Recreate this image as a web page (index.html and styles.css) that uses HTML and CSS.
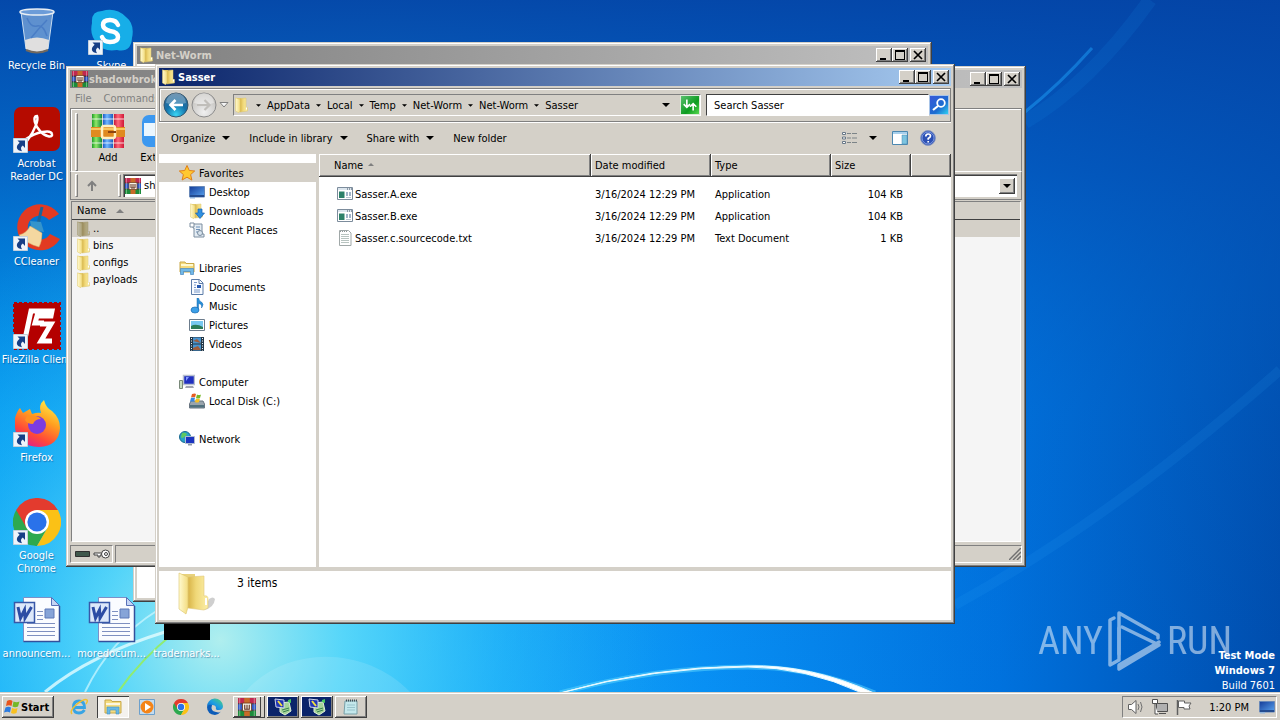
FILE: index.html
```html
<!DOCTYPE html>
<html lang="en">
<head>
<meta charset="UTF-8" />
<meta name="viewport" content="width=device-width, initial-scale=1" />
<title>Desktop</title>
<link rel="stylesheet" href="styles.css">
</head>
<body>

<!-- Shared icons -->
<svg class="defs" aria-hidden="true">
  <defs>
    <linearGradient id="gFolder" x1="0" x2="1"><stop offset="0" stop-color="#d8b448"/><stop offset=".4" stop-color="#f0d878"/><stop offset="1" stop-color="#fbeea8"/></linearGradient>
    <linearGradient id="gFolderFront" x1="0" x2="1"><stop offset="0" stop-color="#fffad0"/><stop offset="1" stop-color="#f3dc80"/></linearGradient>
    <linearGradient id="gRed" x1="0" x2="1"><stop offset="0" stop-color="#c8183c"/><stop offset=".4" stop-color="#ff6878"/><stop offset="1" stop-color="#d01838"/></linearGradient>
    <linearGradient id="gBlue" x1="0" x2="1"><stop offset="0" stop-color="#1c5cc8"/><stop offset=".4" stop-color="#70b8ff"/><stop offset="1" stop-color="#1c5cc0"/></linearGradient>
    <linearGradient id="gGreen" x1="0" x2="1"><stop offset="0" stop-color="#1c9c28"/><stop offset=".4" stop-color="#90e868"/><stop offset="1" stop-color="#108838"/></linearGradient>
    <linearGradient id="gScreen" x1="0" y1="0" x2="1" y2="1"><stop offset="0" stop-color="#143c98"/><stop offset="1" stop-color="#5aa4f0"/></linearGradient>
    <linearGradient id="gFox" x1=".8" y1="0" x2=".3" y2="1"><stop offset="0" stop-color="#fff04a"/><stop offset=".4" stop-color="#ffa020"/><stop offset=".75" stop-color="#ff4838"/><stop offset="1" stop-color="#e0208a"/></linearGradient>
    <radialGradient id="gOrb" cx=".5" cy=".9" r=".9"><stop offset="0" stop-color="#38d4f4"/><stop offset=".5" stop-color="#1470a8"/><stop offset="1" stop-color="#3a6c94"/></radialGradient>
    <radialGradient id="gOrbOff" cx=".5" cy=".8" r=".8"><stop offset="0" stop-color="#f0f0f0"/><stop offset="1" stop-color="#bcbab6"/></radialGradient>
    <linearGradient id="gEdge" x1="0" y1="1" x2="1" y2="0"><stop offset="0" stop-color="#0a58b8"/><stop offset=".5" stop-color="#1e9ce4"/><stop offset="1" stop-color="#50d870"/></linearGradient>
  </defs>
  <symbol id="folder" viewBox="0 0 16 16">
    <path d="M2 1h5v13H2z" fill="#e4cc70"/>
    <path d="M6 1.500l6-.5v9.500h1.500V14L6 15z" fill="url(#gFolder)" stroke="#dcc468" stroke-width=".5"/>
    <path d="M1.500.8L6 2.500V14l-1.200 1.700L1.500 14z" fill="url(#gFolderFront)" stroke="#e0c868" stroke-width=".5"/>
    <path d="M12.500 10.500v2" stroke="#fff"/>
  </symbol>
  <symbol id="shortcut" viewBox="0 0 15 15">
    <path d="M.5.5h14v14H.5z" fill="#eef4fb" stroke="#c4d0dc"/>
    <path d="M4.500 2.500H12V10L9.800 7.600C7.500 9 7.600 11 9 13.200 3.500 12.500 2 8.500 6.600 4.700z" fill="#173f86"/>
  </symbol>
  <symbol id="rar" viewBox="0 0 16 16">
    <path d="M0 0h16v5H0z" fill="#c02850"/><path d="M0 5.500h16v5H0z" fill="#2e56c4"/><path d="M0 11h16v5H0z" fill="#1c8c3a"/>
    <path d="M0 5.200h16M0 10.800h16" stroke="#1c1430" stroke-width=".8"/>
    <path d="M1.500 0v16M14.500 0v16" stroke="#fff" stroke-opacity=".35"/>
    <path d="M5.500 0h5v16h-5z" fill="#c86a28"/>
    <path d="M4 4.500h8v7H4z" fill="#f8f4e8" stroke="#6a3414" stroke-width=".7"/><path d="M6 6v4h4V6M8 6v4" stroke="#603020" fill="none"/>
  </symbol>
  <symbol id="chrome" viewBox="0 0 48 48">
    <path d="M24 24L3.200 12A24 24 0 0 1 44.800 12z" fill="#e33b2e"/>
    <path d="M24 24L24 48A24 24 0 0 1 3.200 12z" fill="#2da94f"/>
    <path d="M24 12h20.800a24 24 0 0 1 .6 1.200L34.400 30 24 24z" fill="#fbc116"/>
    <path d="M34.400 30L24 48a24 24 0 0 1-1.400 0L13.600 30 24 24z" fill="#2da94f"/>
    <path d="M34.400 30L24 48A24 24 0 0 0 44.800 12L30 12z" fill="#fbc116"/>
    <path d="M13.600 30L3.200 12 24 12z" fill="#e33b2e"/>
    <circle cx="24" cy="24" r="12" fill="#fff"/><circle cx="24" cy="24" r="9.600" fill="#2a72ea"/>
  </symbol>
  <symbol id="word" viewBox="0 0 48 48">
    <path d="M10.500 1.500h28l8 8v36h-36z" fill="#fafcff" stroke="#7c90c8"/>
    <path d="M38.500 1.500v8h8z" fill="#c4d4f4" stroke="#5870b8"/>
    <path d="M46.500 10v35.500h-36" fill="none" stroke="#33509c" stroke-width="1.500"/>
    <path d="M14 31.500h28M14 35.500h28M14 39.500h28M24 15.500h6M24 19.500h6M24 23.500h6M14 27.500h28" stroke="#7e90c0"/>
    <path d="M32 13h9v9h-9z" fill="#86a4d8" stroke="#5c78b8"/>
    <path d="M1.500 6.500h20v20h-20z" fill="#dde8fa" stroke="#3858a8" stroke-width="1.500"/>
    <path d="M5 11l2.500 11 4-8 .5 8L18.500 11" fill="none" stroke="#2c4ca4" stroke-width="3"/>
  </symbol>
  <symbol id="monitor" viewBox="0 0 16 16">
    <path d="M.5 2.500h15v10.500H.5z" fill="url(#gScreen)" stroke="#6888b8"/><path d="M1 11h14v2H1z" fill="#244c90"/><path d="M1 13h5v1.500H1z" fill="#90b4dc"/>
  </symbol>
  <symbol id="app" viewBox="0 0 16 16">
    <path d="M.5 1.500h15v12H.5z" fill="#fff" stroke="#7c8c9c"/><path d="M1 2h14v2H1z" fill="#dce6ee"/><path d="M10 3h1M12 3h1M14 3h1" stroke="#405060"/>
    <path d="M2 5.500h5.500V12H2z" fill="#2c8068"/><path d="M9 6h2v4H9zM12 6h2v4h-2z" fill="#a0b4c8"/><path d="M9 11.500h5" stroke="#b8c4d0"/>
  </symbol>
  <symbol id="terminal" viewBox="0 0 18 18">
    <path d="M6 5l9-1 2 9-6 4-5-3z" fill="#a4d498" stroke="#e0f0d8"/><path d="M8 12l7-2M9 14l6-2" stroke="#368050"/>
    <path d="M1 1l9 1v8l-8-1z" fill="#2036b8" stroke="#d0d8e8"/><path d="M4 3l4 5" stroke="#f0e040" stroke-width="2"/>
    <path d="M14 2l3-1v4l-3-1z" fill="#44c860"/>
  </symbol>
  <symbol id="down" viewBox="0 0 8 4"><path d="M0 0h8L4 4z"/></symbol>
  <symbol id="min" viewBox="0 0 16 14"><path d="M4 10h6v2H4z"/></symbol>
  <symbol id="max" viewBox="0 0 16 14"><path d="M3 2h10v10H3zM4 4v7h8V4z" fill-rule="evenodd"/></symbol>
  <symbol id="close" viewBox="0 0 16 14"><path d="M4 3l8 8M12 3l-8 8" stroke="#000" stroke-width="1.700"/></symbol>
</svg>

<main class="desktop">
  <svg class="wallpaper" viewBox="0 0 1280 692" preserveAspectRatio="none" aria-hidden="true">
    <defs>
      <linearGradient id="sky" x1="0" x2="1" y1="0" y2="0">
        <stop offset="0" stop-color="#00a4f6"/><stop offset=".3" stop-color="#20b8f8"/><stop offset=".55" stop-color="#0890f4"/>
        <stop offset=".78" stop-color="#0072de"/><stop offset="1" stop-color="#004cac"/>
      </linearGradient>
      <linearGradient id="shade" x1="0" x2="0" y1="0" y2="1">
        <stop offset="0" stop-color="#0444a6" stop-opacity=".95"/><stop offset=".25" stop-color="#0452b6" stop-opacity=".75"/>
        <stop offset=".6" stop-color="#0468cc" stop-opacity=".2"/><stop offset="1" stop-color="#0468cc" stop-opacity="0"/>
      </linearGradient>
      <radialGradient id="glow" gradientUnits="userSpaceOnUse" cx="220" cy="640" r="440">
        <stop offset="0" stop-color="#b8f2ee" stop-opacity=".95"/><stop offset=".28" stop-color="#60dcfa" stop-opacity=".85"/>
        <stop offset=".65" stop-color="#30c0fc" stop-opacity=".4"/><stop offset="1" stop-color="#20a8f8" stop-opacity="0"/>
      </radialGradient>
    </defs>
    <path d="M0 0h1280v692H0z" fill="url(#sky)"/>
    <path d="M0 0h1280v692H0z" fill="url(#shade)"/>
    <path d="M0 0h1280v692H0z" fill="url(#glow)"/>
    <path d="M955 605Q1110 520 1280 370" fill="none" stroke="#3cb0ff" stroke-opacity=".1" stroke-width="10"/>
    <path d="M1025 112Q1060 84 1092 48" fill="none" stroke="#1c98f0" stroke-opacity=".55" stroke-width="3"/>
    <path d="M1025 122Q1090 84 1150 0" fill="none" stroke="#1c98f0" stroke-opacity=".12" stroke-width="14"/>
    <path d="M245 692C285 645 365 645 410 692z" fill="#fff" opacity=".12"/>
    <path d="M45 692Q90 655 165 632" fill="none" stroke="#e4fcff" stroke-width="3" opacity=".8"/>
    <path d="M85 692Q110 640 158 610" fill="none" stroke="#d0f8ff" stroke-width="2" opacity=".7"/>
    <path d="M118 692Q140 660 175 632" fill="none" stroke="#90ec70" stroke-width="2"/>
    <path d="M560 693Q655 667 748 667Q810 667 875 693" fill="none" stroke="#60d8ff" stroke-width="5" opacity=".5"/>
    <path d="M560 693Q655 667 748 667Q805 667 862 693h12Q810 664 748 666Q650 667 560 693z" fill="#fff" stroke="#e8faff"/>
  </svg>

  <!-- Desktop icons -->
  <nav class="shortcuts">
    <a class="r1 c1" href="#">
      <svg viewBox="0 0 48 48"><path d="M8 4l5 37q11 6 22 0l5-37q-16 5-32 0z" fill="#b8d4f0" fill-opacity=".5" stroke="#c8dcf0"/><path d="M12 32l1 9q11 6 22 0l1-9q-12-5-24 0z" fill="#eee8e0" opacity=".9"/><path d="M14 10q4 10 10 8t10 10M34 12q-8 8-16 18" fill="none" stroke="#3c70c0" stroke-opacity=".6" stroke-width="1.500"/><ellipse cx="24" cy="4" rx="17" ry="3" fill="#6c9cd8" stroke="#e8eef4" stroke-width="1.500"/><path d="M13 42q11 5 22 0" fill="none" stroke="#706860" stroke-width="2"/></svg>
      <span>Recycle Bin</span></a>
    <a class="r1 c2" href="#">
      <svg viewBox="0 0 48 48"><path d="M14 3Q3 3 4 15 1 28 10 36q5 8 19 6 14 3 15-12 3-14-6-21Q28-1 14 3z" fill="#17aee8"/><path d="M30 17q-2-5-8-5-7 0-7 5 0 4 7 6 8 1 8 6t-8 5q-6 0-8-5" fill="none" stroke="#fff" stroke-width="4.500" stroke-linecap="round"/><use href="#shortcut" x="0" y="32" width="15" height="15"/></svg>
      <span>Skype</span></a>
    <a class="r2 c1" href="#">
      <svg viewBox="0 0 48 48"><rect x="1" y="1" width="46" height="44" rx="7" fill="#b50b00"/><path d="M24 10c-5 0-2 10 3 15 5 6 13 7 12 3-1-5-16-2-26 5-5 4-1 6 3-1 5-7 10-18 8-22z" fill="none" stroke="#fff" stroke-width="2.500"/><use href="#shortcut" x="0" y="32" width="15" height="15"/></svg>
      <span>Acrobat<br>Reader DC</span></a>
    <a class="r3 c1" href="#">
      <svg viewBox="0 0 48 48"><path d="M46 10A23 23 0 1 0 47 35L37 30A12 12 0 1 1 36 16z" fill="#e23a22"/><path d="M29 3l-4 17" stroke="#1c6498" stroke-width="3"/><path d="M17 17l11 1 3 10-12-2z" fill="#3494cc"/><path d="M17 22l12 7q0 9-3 14Q14 40 6 31q8-2 11-9z" fill="#f4d8a0" stroke="#d8a860" stroke-width=".5"/><use href="#shortcut" x="0" y="32" width="15" height="15"/></svg>
      <span>CCleaner</span></a>
    <a class="r4 c1 nowrap" href="#">
      <svg viewBox="0 0 48 48"><path d="M1 1h46v46H1z" fill="#b40000" stroke="#b40000" stroke-width="2" stroke-dasharray="3 2"/><path d="M12 37l6-28h21l-1 5H24l-2 7h9M27 22h11L28 39h11" fill="none" stroke="#fff" stroke-width="5"/><use href="#shortcut" x="0" y="32" width="15" height="15"/></svg>
      <span>FileZilla Client</span></a>
    <a class="r5 c1" href="#">
      <svg viewBox="0 0 48 48"><path d="M2 18q2-7 5-10l3 5 7-4 2 5q6-2 9-1-3-8 3-13 2 8 8 11 8 7 8 17-1 18-21 19Q4 46 2 28z" fill="url(#gFox)"/><circle cx="24" cy="25" r="9" fill="#7c3ce0"/><path d="M14 16q10-2 14 3-6 0-8 5-6 0-8-4z" fill="#ff9020"/><use href="#shortcut" x="0" y="32" width="15" height="15"/></svg>
      <span>Firefox</span></a>
    <a class="r6 c1" href="#">
      <svg viewBox="0 0 48 48"><use href="#chrome"/><use href="#shortcut" x="0" y="32" width="15" height="15"/></svg>
      <span>Google<br>Chrome</span></a>
    <a class="r7 c1 nowrap" href="#"><svg viewBox="0 0 48 48"><use href="#word"/></svg><span>announcem...</span></a>
    <a class="r7 c2 nowrap" href="#"><svg viewBox="0 0 48 48"><use href="#word"/></svg><span>moredocum...</span></a>
    <a class="r7 c3 nowrap" href="#"><svg viewBox="0 0 48 48"><path d="M1 1h46v43H1z"/></svg><span>trademarks...</span></a>
  </nav>

  <!-- Net-Worm window -->
  <section class="window win-networm">
    <header class="titlebar">
      <svg class="i16"><use href="#folder"/></svg><h2>Net-Worm</h2>
      <div class="winbtns"><button aria-label="Minimize"><svg><use href="#min"/></svg></button><button aria-label="Maximize"><svg><use href="#max"/></svg></button><button aria-label="Close"><svg><use href="#close"/></svg></button></div>
    </header>
    <div class="blank"></div>
  </section>

  <!-- WinRAR window -->
  <section class="window win-rar">
    <header class="titlebar">
      <svg class="i16"><use href="#rar"/></svg><h2>shadowbroker</h2>
      <div class="winbtns"><button aria-label="Minimize"><svg><use href="#min"/></svg></button><button aria-label="Maximize"><svg><use href="#max"/></svg></button><button aria-label="Close"><svg><use href="#close"/></svg></button></div>
    </header>
    <div class="rar-menu"><button>File</button><button>Commands</button></div>
    <div class="rar-tools">
      <i class="grip"></i>
      <button>
        <svg viewBox="0 0 36 36"><path d="M2 1h10v34H2z" fill="url(#gGreen)"/><path d="M13 1h10v34H13z" fill="url(#gBlue)"/><path d="M24 1h10v34H24z" fill="url(#gRed)"/><path d="M2 6h32M2 30h32" stroke="#fff" stroke-opacity=".4" stroke-width="2"/><path d="M1 14h34v10H1z" fill="#e08a20"/><path d="M1 16h34" stroke="#f8c860" stroke-width="2"/><rect x="12" y="13" width="13" height="12" rx="2" fill="none" stroke="#fff0c0" stroke-width="2.500"/><path d="M18 19h8" stroke="#8c4410" stroke-width="2"/></svg>
        Add</button>
      <button>
        <svg viewBox="0 0 36 36"><rect x="2" y="2" width="32" height="32" rx="7" fill="#3c98f0"/><path d="M4 10h28v13H4z" fill="#eaf6ff"/></svg>
        Extract</button>
    </div>
    <div class="rar-path">
      <i class="grip"></i>
      <button class="up" aria-label="Up one level"><svg viewBox="0 0 12 12"><path d="M6 11V2M2 6l4-4 4 4" fill="none" stroke="#808080" stroke-width="2"/></svg></button>
      <i class="grip"></i>
      <div class="combo"><svg class="i16"><use href="#rar"/></svg><span>shadow</span><button aria-label="Show paths"><svg><use href="#down"/></svg></button></div>
    </div>
    <div class="rar-list">
      <div class="rar-head">Name <svg viewBox="0 0 8 4"><path d="M0 4h8L4 0z" fill="#808080"/></svg></div>
      <ul>
        <li class="sel"><svg class="i16"><use href="#folder"/></svg>..</li>
        <li><svg class="i16"><use href="#folder"/></svg>bins</li>
        <li><svg class="i16"><use href="#folder"/></svg>configs</li>
        <li><svg class="i16"><use href="#folder"/></svg>payloads</li>
      </ul>
    </div>
    <footer class="rar-status">
      <div><svg viewBox="0 0 36 12"><path d="M.5 3.500h14v5H.5z" fill="#40584c" stroke="#303030"/><path d="M19 5h10v2h-4v2h-2V7h-4z" fill="#fff" stroke="#404040"/><circle cx="30.500" cy="6" r="4" fill="#fff" stroke="#404040"/><circle cx="31" cy="6" r="1.500" fill="none" stroke="#404040"/></svg></div>
      <div class="fill"><svg class="sizegrip" viewBox="0 0 12 12"><path d="M0 12L12 0M4 12l8-8M8 12l4-4" stroke="#707070" stroke-width="1.500"/></svg></div>
    </footer>
  </section>

  <!-- Sasser window -->
  <section class="window win-sasser active">
    <header class="titlebar">
      <svg class="i16"><use href="#folder"/></svg><h2>Sasser</h2>
      <div class="winbtns"><button aria-label="Minimize"><svg><use href="#min"/></svg></button><button aria-label="Maximize"><svg><use href="#max"/></svg></button><button aria-label="Close"><svg><use href="#close"/></svg></button></div>
    </header>
    <div class="addressbar">
      <button class="orb" aria-label="Back"><svg viewBox="0 0 26 26"><circle cx="13" cy="13" r="12" fill="url(#gOrb)" stroke="#34566e"/><path d="M3 11a10 10 0 0 1 20 0q-10 3-20 0z" fill="#fff" opacity=".28"/><path d="M20 13H8M12.500 8l-5 5 5 5" fill="none" stroke="#fff" stroke-width="2.600"/></svg></button>
      <button class="orb" aria-label="Forward"><svg viewBox="0 0 26 26"><circle cx="13" cy="13" r="12" fill="url(#gOrbOff)" stroke="#8c8c8c"/><path d="M3 11a10 10 0 0 1 20 0q-10 3-20 0z" fill="#fff" opacity=".4"/><path d="M6 13h12M13.500 8l5 5-5 5" fill="none" stroke="#c0beba" stroke-width="2.200"/></svg></button>
      <button class="recent" aria-label="Recent pages"><svg viewBox="0 0 10 6"><path d="M1 .5h8L5 5z" fill="#f4f4f4" stroke="#808080"/></svg></button>
      <div class="crumbs">
        <svg class="i16"><use href="#folder"/></svg>
        <svg class="sep"><use href="#down"/></svg><a href="#">AppData</a>
        <svg class="sep"><use href="#down"/></svg><a href="#">Local</a>
        <svg class="sep"><use href="#down"/></svg><a href="#">Temp</a>
        <svg class="sep"><use href="#down"/></svg><a href="#">Net-Worm</a>
        <svg class="sep"><use href="#down"/></svg><a href="#">Net-Worm</a>
        <svg class="sep"><use href="#down"/></svg><a href="#">Sasser</a>
        <button class="drop" aria-label="Previous locations"><svg><use href="#down"/></svg></button>
        <button class="refresh" aria-label="Refresh"><svg viewBox="0 0 20 18"><path d="M6.500 3v8M3 8l3.500 3.500L10 8M13.500 15V8M10 11l3.500-3.500L17 11" fill="none" stroke="#fff" stroke-width="1.800"/></svg></button>
      </div>
      <input type="text" placeholder="Search Sasser" aria-label="Search Sasser">
      <button class="search" aria-label="Search"><svg viewBox="0 0 18 18"><circle cx="11" cy="7" r="3.800" fill="none" stroke="#fff" stroke-width="1.800"/><path d="M8 10l-5 4" stroke="#fff" stroke-width="2.200"/></svg></button>
    </div>
    <div class="commands">
      <button>Organize <svg class="drp"><use href="#down"/></svg></button>
      <button>Include in library <svg class="drp"><use href="#down"/></svg></button>
      <button>Share with <svg class="drp"><use href="#down"/></svg></button>
      <button>New folder</button>
      <div class="views">
        <button aria-label="Change view"><svg class="i16" viewBox="0 0 16 16"><path d="M1.500 2.500h3v2h-3zM1.500 7h3v2h-3zM1.500 11.500h3v2h-3z" fill="#fff" stroke="#687888"/><path d="M6 3.500h4M11 3.500h5M6 8h4M11 8h5M6 12.500h4M11 12.500h5" stroke="#7c8488"/></svg></button>
        <button class="more" aria-label="More views"><svg class="drp"><use href="#down"/></svg></button>
        <button aria-label="Preview pane"><svg class="i16" viewBox="0 0 16 16"><path d="M.5 1.500h15v13H.5z" fill="#fff" stroke="#4c88b0"/><path d="M1 2h14v2H1z" fill="#a8d0ec"/><path d="M10 5h5v9h-5z" fill="#7cc4e0" stroke="#4c88b0" stroke-width=".5"/></svg></button>
        <button aria-label="Help"><svg class="i16" viewBox="0 0 16 16"><circle cx="8" cy="8" r="7.400" fill="#2c50b4" stroke="#8898c0"/><circle cx="8" cy="8" r="6" fill="none" stroke="#a0b8f0" stroke-width=".7"/><path d="M5.800 6.500q0-2.500 2.400-2.500 2.300 0 2.300 2 0 1.300-2.300 2.500v1.300M8.200 11v1.500" fill="none" stroke="#fff" stroke-width="1.700"/></svg></button>
      </div>
    </div>
    <div class="panes">
      <nav class="tree">
        <ul>
          <li><a class="root current" href="#"><svg class="i16" viewBox="0 0 16 16"><path d="M8 .5l2.300 5 5.400.5-4.100 3.600 1.300 5.500L8 12.200 3.100 15l1.300-5.400L.3 6l5.400-.5z" fill="#ffc830" stroke="#e08018"/></svg>Favorites</a>
            <ul>
              <li><a href="#"><svg class="i16"><use href="#monitor"/></svg>Desktop</a></li>
              <li><a href="#"><svg class="i16" viewBox="0 0 16 16"><use href="#folder" width="16" height="16"/><path d="M9 6h4v4h2.500L11 15.500 6.500 10H9z" fill="#3090e0" stroke="#1460b0" stroke-width=".7"/></svg>Downloads</a></li>
              <li><a href="#"><svg class="i16" viewBox="0 0 16 16"><path d="M4 2h9v10h2v3H5V6H4z" fill="#e4ecf3" stroke="#7c8ea0"/><path d="M1 1h4v4H1z" fill="#fff" stroke="#7c8ea0"/><path d="M7 5h4M7 7.500h4M7 10h4" stroke="#6c90b8"/><circle cx="11" cy="11" r="2.500" fill="#d8e4ee" stroke="#7c8ea0"/></svg>Recent Places</a></li>
            </ul>
          </li>
          <li><a class="root" href="#"><svg class="i16" viewBox="0 0 16 16"><path d="M1 2h5l1 1.500h8V12H1z" fill="#f4da7c" stroke="#c8a848"/><path d="M2 5h12" stroke="#fffad0" stroke-width="2"/><path d="M1.500 8.500h13v6h-3v-3h-7v3h-3z" fill="#70b8e8" stroke="#4888c0" stroke-width=".7"/></svg>Libraries</a>
            <ul>
              <li><a href="#"><svg class="i16" viewBox="0 0 16 16"><path d="M2.500.5h8l3.500 3.500v11.500H2.500z" fill="#f8fbff" stroke="#5c7ca8"/><path d="M10 1v3.500h4" fill="none" stroke="#5c7ca8"/><path d="M5 3.500h3M5 6h2M5 8.500h2M5 11h6M5 13h6" stroke="#7898c8"/><path d="M8 6h4v3H8z" fill="#2458b0"/></svg>Documents</a></li>
              <li><a href="#"><svg class="i16" viewBox="0 0 16 16"><path d="M8 12V0h1.500q.5 3 3 4 3 2 0 6 1-4-3-4.500V12z" fill="#2890d8" stroke="#1868b0" stroke-width=".5"/><ellipse cx="6" cy="12" rx="4" ry="3" fill="#3ca0e8" stroke="#1868b0" stroke-width=".7"/></svg>Music</a></li>
              <li><a href="#"><svg class="i16" viewBox="0 0 16 16"><path d="M.5 2.500h15v11H.5z" fill="#fff" stroke="#6c7c8c"/><path d="M2 4h12v8H2z" fill="#78c8f0"/><path d="M2 9q5-3 12 1v2H2z" fill="#2c7c58"/></svg>Pictures</a></li>
              <li><a href="#"><svg class="i16" viewBox="0 0 16 16"><path d="M1 1h14v14H1z" fill="#243848"/><path d="M4 1.500h8v6H4zM4 8.500h8v6H4z" fill="#4894d0"/><path d="M4 5l4-2 4 4zM4 12l5-2 3 4H4z" fill="#a05c3c"/><path d="M2.500 2v13M13.500 2v13" stroke="#f0f4f8" stroke-dasharray="1 1.500"/></svg>Videos</a></li>
            </ul>
          </li>
          <li><a class="root" href="#"><svg class="i16" viewBox="0 0 16 16"><path d="M4.500 1.500h11v9h-11z" fill="#2030c0" stroke="#b8c0d0" stroke-width="1.500"/><path d="M7 3h3l-3 4z" fill="#8498ff"/><path d="M7 12h7l1 2H6z" fill="#a0a4b0"/><path d="M.5 6.500h3v8h-3z" fill="#c8dcc0" stroke="#788878"/></svg>Computer</a>
            <ul>
              <li><a href="#"><svg class="i16" viewBox="0 0 16 16"><path d="M2 8h12l1.500 3v4H.5v-4z" fill="#98a4ac" stroke="#687480"/><path d="M1 12h14v2.500H1z" fill="#50707c"/><path d="M3 1q3-1 4 0L6 4.500q-2-1-4 0z" fill="#e85c20"/><path d="M8 1.500q2 1 4 0L11 5q-2 1-4 0z" fill="#78b828"/><path d="M2 5q2-1 4 0L5 8.500H1z" fill="#3888e0"/><path d="M7 5.500q2 1 4 0L10 9q-2 1-4 0z" fill="#f8c020"/></svg>Local Disk (C:)</a></li>
            </ul>
          </li>
          <li><a class="root" href="#"><svg class="i16" viewBox="0 0 16 16"><circle cx="6" cy="6" r="5.500" fill="#28a0c8" stroke="#186890"/><path d="M3 2q3-1 5 1-1 3-3 3-2 2-3 0z" fill="#60c860"/><path d="M6.500 5.500h9v7h-9z" fill="#1c34c0" stroke="#b0bcd0"/><path d="M9 13h4v1.500H9z" fill="#9098a8"/></svg>Network</a></li>
        </ul>
      </nav>
      <div class="files">
        <table>
          <colgroup><col><col class="c-date"><col class="c-type"><col class="c-size"><col class="c-end"></colgroup>
          <thead><tr><th>Name <svg viewBox="0 0 6 3"><path d="M0 3h6L3 0z" fill="#808080"/></svg></th><th>Date modified</th><th>Type</th><th>Size</th><th></th></tr></thead>
          <tbody>
            <tr><td><svg class="i16"><use href="#app"/></svg>Sasser.A.exe</td><td>3/16/2024 12:29 PM</td><td>Application</td><td>104 KB</td><td></td></tr>
            <tr><td><svg class="i16"><use href="#app"/></svg>Sasser.B.exe</td><td>3/16/2024 12:29 PM</td><td>Application</td><td>104 KB</td><td></td></tr>
            <tr><td><svg class="i16" viewBox="0 0 16 16"><path d="M2.500.5h9l2.500 2.500v12.500H2.500z" fill="#fff" stroke="#a0a8a8"/><path d="M4 4.500h8M4 6.500h8M4 8.500h8M4 10.500h8M4 12.500h8" stroke="#b8c4c0"/><path d="M3 1.500h8" stroke="#909898" stroke-dasharray="1 1"/></svg>Sasser.c.sourcecode.txt</td><td>3/16/2024 12:29 PM</td><td>Text Document</td><td>1 KB</td><td></td></tr>
          </tbody>
        </table>
      </div>
    </div>
    <footer class="details">
      <svg viewBox="0 0 42 44"><path d="M27 38q10-2 11-11-2-3-6 0z" fill="#606060" opacity=".3"/><path d="M4 2h14v34H8z" fill="#e8d27c"/><path d="M11 5l16-1v20q4-1 4 3v9l-4 2-16-2z" fill="url(#gFolder)" stroke="#e0c878" stroke-width=".6"/><path d="M2 1l9 4v30l-2 7-7-5z" fill="url(#gFolderFront)" stroke="#dcc468" stroke-width=".6"/><path d="M29 26v7" fill="none" stroke="#fff" stroke-width="2"/></svg>
      <span>3 items</span>
    </footer>
  </section>

  <!-- Watermark and build info -->
  <div class="watermark" aria-hidden="true">
    <span>ANY</span>
    <svg viewBox="0 0 56 62"><g fill="none" stroke="#fff" stroke-width="3.500" stroke-linejoin="round" stroke-linecap="round"><path d="M12 44V3l39 22v3"/><path d="M15 17l37 18-40 24v-4l40-23"/><path d="M7 8L3 10v45l9-5V18"/></g></svg>
    <span>RUN</span>
  </div>
  <div class="build"><b>Test Mode</b><b>Windows 7</b><span>Build 7601</span></div>
</main>

<!-- Taskbar -->
<footer class="taskbar">
  <button class="start"><svg class="i16" viewBox="0 0 16 16"><path d="M3 2q3-2 5.500 0L7.500 7Q5 5.500 2 7z" fill="#e8541c"/><path d="M9.500 2.500q3 1.500 6 0l-1.500 5q-3 1.500-5.500 0z" fill="#74b828"/><path d="M1.500 8.500q3-1.500 5.500 0l-1 5q-2.500-1.500-6 0z" fill="#2c7ce0"/><path d="M8 9q3 1.500 5.500 0l-1 5q-3 1.500-5.500 0z" fill="#f8c020"/></svg>Start</button>
  <div class="pinned">
    <button class="pin" aria-label="Internet Explorer"><svg viewBox="0 0 18 18"><path d="M14.500 12Q12.500 15 9 15q-5.500 0-5.500-6T9 3q5.500 0 5.500 6.500H5" fill="none" stroke="#38a4e4" stroke-width="2.800"/><path d="M2 16Q-1 13 7 6q8-6 10-4 1 1-1 4" fill="none" stroke="#f0c030" stroke-width="1.500"/></svg></button>
    <button class="pin pressed" aria-label="Explorer"><svg viewBox="0 0 18 18"><path d="M1 2h6l1 1.500h9V15H1z" fill="#f4dc80" stroke="#c8a848"/><path d="M2 6h14" stroke="#fff" stroke-width="1.500"/><path d="M3 9h12v7h-3v-4H6v4H3z" fill="#68b8e4" stroke="#4090c0" stroke-width=".6"/></svg></button>
    <button class="pin" aria-label="Media Player"><svg viewBox="0 0 18 18"><path d="M1.500 1.500h15v15h-15z" fill="#c4dcf0" stroke="#6ca0cc"/><circle cx="9" cy="9" r="6.500" fill="#f48418"/><path d="M7 5l6 4-6 4z" fill="#fff"/></svg></button>
    <button class="pin" aria-label="Chrome"><svg viewBox="0 0 18 18"><use href="#chrome" x="1" y="1" width="16" height="16"/></svg></button>
    <button class="pin" aria-label="Edge"><svg viewBox="0 0 18 18"><path d="M1 9a8 8 0 0 1 16-1q0 4-4 4-4 0-3-2 0-3-4-3-3 0-5 2z" fill="url(#gEdge)"/><path d="M1 9q1-3 5-2-2 6 4 7 3 1 5-.5Q12 17 9 17 1 16 1 9z" fill="#0c5cb8"/></svg></button>
  </div>
  <div class="tasks">
    <button class="task stack" aria-label="WinRAR"><svg><use href="#rar"/></svg></button>
    <button class="task dark" aria-label="Terminal 1"><svg><use href="#terminal"/></svg></button>
    <button class="task dark" aria-label="Terminal 2"><svg><use href="#terminal"/></svg></button>
    <button class="task" aria-label="Notepad"><svg viewBox="0 0 18 18"><path d="M3 3h12v13H2z" fill="#c4e8ec" stroke="#78a0a8"/><path d="M4 2.500h11" stroke="#405058" stroke-width="2" stroke-dasharray="1 1"/><path d="M5 7h8M5 9.500h8M5 12h8" stroke="#98c4cc"/></svg></button>
  </div>
  <div class="tray">
    <svg viewBox="0 0 18 16"><path d="M1.500 5.500h3L9 1.500v13l-4.500-4h-3z" fill="#fff" stroke="#606060"/><path d="M11 5q2 3 0 6M13.500 3q3 5 0 10" fill="none" stroke="#707070"/></svg>
    <svg viewBox="0 0 18 16"><path d="M5.500 4.500h11v8h-11z" fill="#b0b0b0" stroke="#505050"/><path d="M8 14.500h7" stroke="#505050"/><path d="M1.500.5h5v4h-5zM4 5v10h3" fill="#fff" stroke="#505050"/></svg>
    <svg viewBox="0 0 18 16"><path d="M2.500 1v15" stroke="#606060" stroke-width="1.500"/><path d="M3.500 2h6v2H16l-2 3 1 3H9V8.500H3.500z" fill="#fff" stroke="#606060"/></svg>
    <time>1:20 PM</time>
    <button aria-label="Show desktop"><svg class="i16"><use href="#monitor"/></svg></button>
  </div>
</footer>

</body>
</html>
```

FILE: styles.css
```css
* {
  box-sizing: border-box;
}

body {
  margin: 0;
  height: 100vh;
  display: flex;
  flex-direction: column;
  overflow: hidden;
  font-family: "DejaVu Sans Condensed", "DejaVu Sans", sans-serif;
  font-stretch: condensed;
  font-size: 11px;
  line-height: 13px;
  color: #000;
}

button, input {
  font: inherit;
  color: inherit;
}

button {
  margin: 0;
  padding: 0;
  border: 0;
  background: none;
}

a {
  color: inherit;
  text-decoration: none;
}

ul {
  margin: 0;
  padding: 0;
  list-style: none;
}

h2 {
  margin: 0;
  font-size: 11px;
}

svg {
  display: block;
  flex: none;
}

.defs {
  position: absolute;
  width: 0;
  height: 0;
}

.i16 {
  width: 16px;
  height: 16px;
}

/* Desktop */
.desktop {
  flex: 1;
  position: relative;
  min-height: 0;
  overflow: hidden;
}

.wallpaper {
  position: absolute;
  width: 100%;
  height: 100%;
}

.shortcuts {
  position: relative;
  display: grid;
  grid-template-columns: repeat(3, 75px);
  grid-template-rows: repeat(7, 98px);
  padding-top: 8px;
  color: #fff;
  text-align: center;
  text-shadow: 1px 1px 1px rgba(0, 30, 90, 0.4);
}

.shortcuts a {
  display: flex;
  flex-direction: column;
  align-items: center;
  gap: 3px;
  padding-right: 2px;
}

.shortcuts svg {
  width: 48px;
  height: 48px;
}

.nowrap {
  white-space: nowrap;
}

.c1 { grid-column: 1; }
.c2 { grid-column: 2; }
.c3 { grid-column: 3; }
.r1 { grid-row: 1; }
.r2 { grid-row: 2; }
.r3 { grid-row: 3; }
.r4 { grid-row: 4; }
.r5 { grid-row: 5; }
.r6 { grid-row: 6; }
.r7 { grid-row: 7; }

/* Window frame */
.window {
  position: absolute;
  display: flex;
  flex-direction: column;
  padding: 4px;
  overflow: hidden;
  background: #d4d0c8;
  box-shadow: inset -1px -1px #404040, inset 1px 1px #d4d0c8, inset -2px -2px #808080, inset 2px 2px #fff;
}

.win-networm {
  left: 133px;
  top: 42px;
  width: 799px;
  height: 560px;
}

.win-rar {
  left: 66px;
  top: 66px;
  width: 960px;
  height: 501px;
}

.win-sasser {
  left: 155px;
  top: 64px;
  width: 800px;
  height: 560px;
}

.titlebar {
  flex: none;
  display: flex;
  align-items: center;
  gap: 1px;
  height: 18px;
  padding: 0 2px;
  background: linear-gradient(to right, #808080, #c0c0c0);
  color: #d4d0c8;
}

.active .titlebar {
  background: linear-gradient(to right, #0a246a, #a6caf0);
  color: #fff;
}

.winbtns {
  display: flex;
  margin-left: auto;
}

.winbtns button {
  width: 16px;
  height: 14px;
  background: #d4d0c8;
  box-shadow: inset -1px -1px #404040, inset 1px 1px #fff, inset -2px -2px #808080;
}

.winbtns button:last-child {
  margin-left: 2px;
}

.winbtns svg {
  width: 16px;
  height: 14px;
}

.blank {
  flex: 1;
  background: #fff;
}

/* WinRAR */
.rar-menu {
  display: flex;
  gap: 12px;
  height: 20px;
  padding-left: 5px;
  color: #808080;
}

.rar-tools {
  display: flex;
  gap: 12px;
  height: 63px;
  padding: 4px 4px 0;
  border: 1px solid #808080;
  border-bottom: 0;
  box-shadow: inset 1px 1px #fff;
}

.rar-tools button {
  flex: none;
  display: flex;
  flex-direction: column;
  align-items: center;
  gap: 2px;
}

.rar-tools button + button {
  margin-left: 2px;
}

.rar-tools svg {
  width: 36px;
  height: 36px;
}

.grip {
  width: 3px;
  border: 1px solid #808080;
  border-top-color: #fff;
  border-left-color: #fff;
}

.rar-path {
  display: flex;
  gap: 8px;
  height: 29px;
  padding: 2px 4px;
  border: 1px solid #808080;
  border-top-color: #fff;
}

.up {
  padding-right: 12px;
}

.up svg {
  width: 12px;
  height: 12px;
}

.combo {
  flex: 1;
  display: flex;
  align-items: center;
  gap: 3px;
  margin-left: -6px;
  padding: 2px;
  background: #fff;
  box-shadow: inset 1px 1px #808080, inset 2px 2px #404040;
}

.combo button {
  display: grid;
  place-items: center;
  width: 16px;
  height: 16px;
  margin-left: auto;
  background: #d4d0c8;
  box-shadow: inset -1px -1px #404040, inset 1px 1px #fff, inset -2px -2px #808080;
}

.combo button svg {
  width: 8px;
  height: 4px;
}

.rar-list {
  flex: 1;
  margin: 1px 1px 3px;
  background: #f5f5f5;
  border: 1px solid #808080;
  border-right-color: #fff;
  border-bottom-color: #fff;
}

.rar-head {
  display: flex;
  align-items: center;
  gap: 10px;
  height: 18px;
  padding-left: 5px;
  background: #d4d0c8;
  border-bottom: 1px solid #404040;
}

.rar-head svg {
  width: 8px;
  height: 4px;
}

.rar-list li {
  display: flex;
  align-items: center;
  gap: 1px;
  height: 17px;
  padding-left: 4px;
}

.rar-list .sel {
  background: #d4d0c8;
}

.sel svg {
  filter: brightness(0.75) saturate(0.6);
}

.rar-status {
  display: flex;
  gap: 2px;
  height: 18px;
}

.rar-status div {
  display: flex;
  align-items: center;
  padding: 0 1px 0 4px;
  border: 1px solid #808080;
  border-right-color: #fff;
  border-bottom-color: #fff;
}

.rar-status svg {
  width: 36px;
  height: 12px;
}

.rar-status .fill {
  flex: 1;
  justify-content: flex-end;
  padding: 0;
}

.rar-status .sizegrip {
  width: 12px;
}

/* Address bar */
.addressbar {
  flex: none;
  display: flex;
  align-items: center;
  height: 34px;
  margin-top: 2px;
  padding: 0 1px 0 3px;
  border: 1px solid #808080;
  box-shadow: inset 1px 1px #fff, 0 1px #fff;
}

.orb, .orb svg {
  width: 26px;
  height: 26px;
}

.orb + .orb {
  margin-left: 2px;
}

.recent {
  margin: 0 4px 0 2px;
}

.recent svg {
  width: 10px;
  height: 6px;
}

.crumbs {
  flex: 1;
  display: flex;
  align-items: center;
  gap: 6px;
  height: 22px;
  border: 1px solid #808080;
  border-right-color: #fff;
  border-bottom-color: #fff;
}

.sep {
  width: 5px;
  height: 3px;
}

.drop {
  margin: 0 4px 0 auto;
}

.drop svg, .drp {
  width: 8px;
  height: 4px;
}

.refresh {
  border: 1px solid #dcebd8;
  background: linear-gradient(135deg, #5cc070, #0c9c20 60%, #58d850);
}

.refresh svg {
  width: 18px;
  height: 18px;
}

.addressbar input {
  width: 223px;
  height: 22px;
  margin-left: 5px;
  padding: 0 7px;
  border: 1px solid #404040;
  border-right-color: #fff;
  border-bottom-color: #fff;
  background: #fff;
}

.addressbar input::placeholder {
  color: #000;
  opacity: 1;
}

.search {
  border: 1px solid #a8c4e8;
  background: linear-gradient(135deg, #3858d8, #1c6cd0 60%, #30d0f0);
}

.search svg {
  width: 18px;
  height: 18px;
}

/* Command bar */
.commands {
  flex: none;
  display: flex;
  align-items: center;
  gap: 19px;
  height: 32px;
  padding: 0 15px 0 12px;
}

.commands button {
  display: flex;
  align-items: center;
  gap: 7px;
}

.views {
  display: flex;
  align-items: center;
  gap: 12px;
  margin-left: auto;
}

.views .more {
  padding-right: 3px;
}

/* Panes */
.panes {
  flex: 1;
  display: flex;
  min-height: 0;
}

.tree {
  width: 160px;
  padding-top: 9px;
  background: #fff;
  border-right: 3px solid #d4d0c8;
}

.tree a {
  display: flex;
  align-items: center;
  gap: 4px;
  height: 19px;
  padding: 1px 0 0 30px;
}

.tree .root {
  padding-left: 20px;
}

.tree .current {
  background: #d4d0c8;
}

.tree > ul > li {
  margin-bottom: 19px;
}

.files {
  flex: 1;
  background: #fff;
}

.files table {
  width: 100%;
  table-layout: fixed;
  border-collapse: separate;
  border-spacing: 0;
}

.c-date, .c-type {
  width: 120px;
}

.c-size {
  width: 80px;
}

.c-end {
  width: 40px;
}

.files th {
  height: 23px;
  padding: 0 0 0 4px;
  background: #d4d0c8;
  box-shadow: inset -1px -1px #404040, inset 1px 1px #fff, inset -2px -2px #808080;
  font-weight: normal;
  text-align: left;
}

.files th:first-child {
  padding-left: 15px;
}

.files th svg {
  display: inline-block;
  width: 6px;
  height: 3px;
  margin: 0 0 3px 2px;
}

.files tbody::before {
  content: "";
  display: block;
  height: 6px;
}

.files td {
  height: 22px;
  padding: 0 0 0 4px;
}

.files td:first-child {
  display: flex;
  align-items: center;
  gap: 2px;
  padding-left: 18px;
}

.files td:nth-child(4) {
  padding-right: 8px;
  text-align: right;
}

.details {
  flex: none;
  display: flex;
  gap: 18px;
  height: 53px;
  padding: 1px 18px;
  border-top: 4px solid #d4d0c8;
  background: #fff;
  font-size: 12px;
}

.details svg {
  width: 42px;
  height: 44px;
}

.details span {
  padding-top: 5px;
}

/* Watermark */
.watermark {
  position: absolute;
  right: 48px;
  bottom: 20px;
  display: flex;
  align-items: center;
  gap: 4px;
  color: #fff;
  opacity: 0.5;
  font-family: "Liberation Sans Narrow", Roboto, sans-serif;
  font-size: 38px;
  line-height: 40px;
}

.watermark svg {
  width: 56px;
  height: 62px;
}

.build {
  position: absolute;
  right: 5px;
  bottom: 0;
  display: flex;
  flex-direction: column;
  align-items: flex-end;
  gap: 2px;
  color: #fff;
}

/* Taskbar */
.taskbar {
  flex: none;
  display: flex;
  align-items: center;
  height: 28px;
  padding: 2px 3px 0 2px;
  background: #d4d0c8;
  box-shadow: inset 0 1px #d4d0c8, inset 0 2px #fff;
}

.start, .task, .pressed {
  height: 22px;
  background: #d4d0c8;
  box-shadow: inset -1px -1px #404040, inset 1px 1px #fff, inset -2px -2px #808080;
}

.start {
  display: flex;
  align-items: center;
  gap: 1px;
  padding: 0 5px 0 2px;
  font-weight: bold;
}

.pinned, .tasks {
  display: flex;
  gap: 2px;
}

.pinned {
  margin-left: 9px;
}

.tasks {
  margin-left: 2px;
}

.pin, .task {
  display: grid;
  place-items: center;
  width: 32px;
  height: 22px;
}

.pin svg, .task svg {
  width: 18px;
  height: 18px;
}

.pressed {
  background: #f4f2ee;
  box-shadow: inset 1px 1px #404040, inset -1px -1px #fff;
}

.task.stack {
  padding-right: 4px;
  box-shadow: inset -1px -1px #404040, inset 1px 1px #fff, inset -4px 0 #d4d0c8, inset -5px -2px #404040;
}

.task.dark {
  background: #0a246a;
}

.tray {
  display: flex;
  align-items: center;
  gap: 6px;
  height: 22px;
  margin-left: auto;
  padding: 0 1px 0 4px;
  border: 1px solid #808080;
  border-right-color: #fff;
  border-bottom-color: #fff;
}

.tray > svg {
  width: 18px;
  height: 16px;
}

.tray time {
  margin: 0 4px 0 10px;
}
```
